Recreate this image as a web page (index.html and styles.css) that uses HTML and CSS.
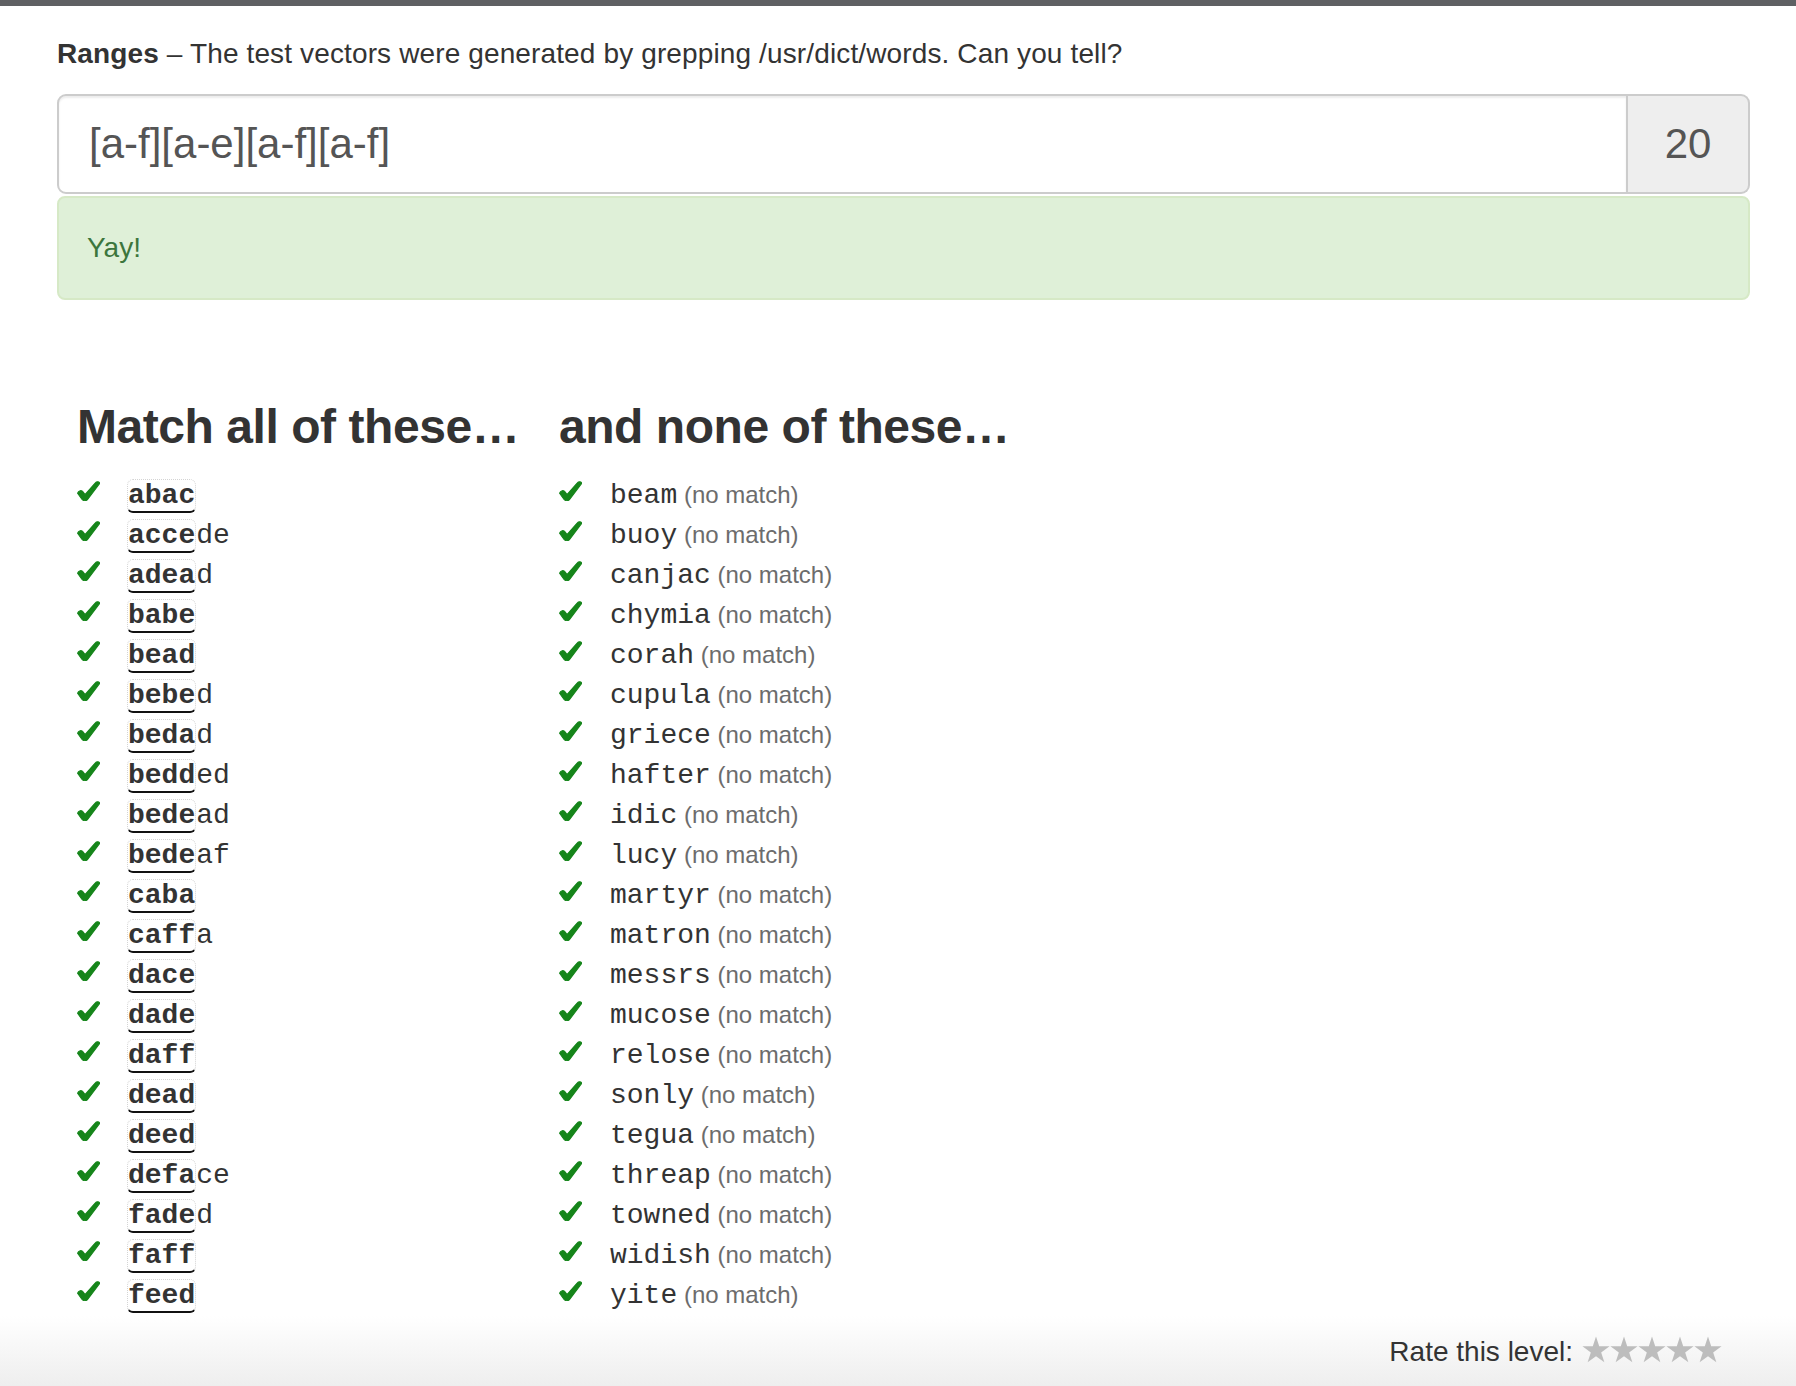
FILE: index.html
```html
<!DOCTYPE html>
<html lang="en">
<head>
<meta charset="utf-8">
<title>Regex Crossword – Ranges</title>
<link rel="stylesheet" href="styles.css">
</head>
<body>
<svg class="defs" width="0" height="0" aria-hidden="true">
  <symbol id="chk" viewBox="0 0 23 20">
    <path d="M0.6 12.2 C1.5 9.4 4.6 8.8 6.2 11 L8 13.6 L18.4 1.8 C19.7 0.2 22.8 0.5 22.5 2.6 L10.8 18.2 C9.3 20.2 6.2 20.2 4.9 18.3 Z"/>
  </symbol>
  <symbol id="star" viewBox="0 0 28 27.5">
    <polygon points="14,0.5 17.26,10.52 27.79,10.52 19.27,16.71 22.52,26.73 14,20.54 5.48,26.73 8.73,16.71 0.21,10.52 10.74,10.52"/>
  </symbol>
</svg>
<div class="topbar"></div>
<div class="page">
  <main class="container">
    <p class="intro"><b>Ranges</b> – The test vectors were generated by grepping /usr/dict/words. Can you tell?</p>
    <div class="input-group">
      <div class="regex">[a-f][a-e][a-f][a-f]</div>
      <div class="score">20</div>
    </div>
    <div class="alert">Yay!</div>
    <div class="lists">
      <section class="col col-match">
        <h3>Match all of these…</h3>
        <ul>
          <li><svg class="chk"><use href="#chk"/></svg><span class="word"><span class="m">abac</span></span></li>
          <li><svg class="chk"><use href="#chk"/></svg><span class="word"><span class="m">acce</span>de</span></li>
          <li><svg class="chk"><use href="#chk"/></svg><span class="word"><span class="m">adea</span>d</span></li>
          <li><svg class="chk"><use href="#chk"/></svg><span class="word"><span class="m">babe</span></span></li>
          <li><svg class="chk"><use href="#chk"/></svg><span class="word"><span class="m">bead</span></span></li>
          <li><svg class="chk"><use href="#chk"/></svg><span class="word"><span class="m">bebe</span>d</span></li>
          <li><svg class="chk"><use href="#chk"/></svg><span class="word"><span class="m">beda</span>d</span></li>
          <li><svg class="chk"><use href="#chk"/></svg><span class="word"><span class="m">bedd</span>ed</span></li>
          <li><svg class="chk"><use href="#chk"/></svg><span class="word"><span class="m">bede</span>ad</span></li>
          <li><svg class="chk"><use href="#chk"/></svg><span class="word"><span class="m">bede</span>af</span></li>
          <li><svg class="chk"><use href="#chk"/></svg><span class="word"><span class="m">caba</span></span></li>
          <li><svg class="chk"><use href="#chk"/></svg><span class="word"><span class="m">caff</span>a</span></li>
          <li><svg class="chk"><use href="#chk"/></svg><span class="word"><span class="m">dace</span></span></li>
          <li><svg class="chk"><use href="#chk"/></svg><span class="word"><span class="m">dade</span></span></li>
          <li><svg class="chk"><use href="#chk"/></svg><span class="word"><span class="m">daff</span></span></li>
          <li><svg class="chk"><use href="#chk"/></svg><span class="word"><span class="m">dead</span></span></li>
          <li><svg class="chk"><use href="#chk"/></svg><span class="word"><span class="m">deed</span></span></li>
          <li><svg class="chk"><use href="#chk"/></svg><span class="word"><span class="m">defa</span>ce</span></li>
          <li><svg class="chk"><use href="#chk"/></svg><span class="word"><span class="m">fade</span>d</span></li>
          <li><svg class="chk"><use href="#chk"/></svg><span class="word"><span class="m">faff</span></span></li>
          <li><svg class="chk"><use href="#chk"/></svg><span class="word"><span class="m">feed</span></span></li>
        </ul>
      </section>
      <section class="col col-none">
        <h3>and none of these…</h3>
        <ul>
          <li><svg class="chk"><use href="#chk"/></svg><span class="word">beam</span><span class="nm"> (no match)</span></li>
          <li><svg class="chk"><use href="#chk"/></svg><span class="word">buoy</span><span class="nm"> (no match)</span></li>
          <li><svg class="chk"><use href="#chk"/></svg><span class="word">canjac</span><span class="nm"> (no match)</span></li>
          <li><svg class="chk"><use href="#chk"/></svg><span class="word">chymia</span><span class="nm"> (no match)</span></li>
          <li><svg class="chk"><use href="#chk"/></svg><span class="word">corah</span><span class="nm"> (no match)</span></li>
          <li><svg class="chk"><use href="#chk"/></svg><span class="word">cupula</span><span class="nm"> (no match)</span></li>
          <li><svg class="chk"><use href="#chk"/></svg><span class="word">griece</span><span class="nm"> (no match)</span></li>
          <li><svg class="chk"><use href="#chk"/></svg><span class="word">hafter</span><span class="nm"> (no match)</span></li>
          <li><svg class="chk"><use href="#chk"/></svg><span class="word">idic</span><span class="nm"> (no match)</span></li>
          <li><svg class="chk"><use href="#chk"/></svg><span class="word">lucy</span><span class="nm"> (no match)</span></li>
          <li><svg class="chk"><use href="#chk"/></svg><span class="word">martyr</span><span class="nm"> (no match)</span></li>
          <li><svg class="chk"><use href="#chk"/></svg><span class="word">matron</span><span class="nm"> (no match)</span></li>
          <li><svg class="chk"><use href="#chk"/></svg><span class="word">messrs</span><span class="nm"> (no match)</span></li>
          <li><svg class="chk"><use href="#chk"/></svg><span class="word">mucose</span><span class="nm"> (no match)</span></li>
          <li><svg class="chk"><use href="#chk"/></svg><span class="word">relose</span><span class="nm"> (no match)</span></li>
          <li><svg class="chk"><use href="#chk"/></svg><span class="word">sonly</span><span class="nm"> (no match)</span></li>
          <li><svg class="chk"><use href="#chk"/></svg><span class="word">tegua</span><span class="nm"> (no match)</span></li>
          <li><svg class="chk"><use href="#chk"/></svg><span class="word">threap</span><span class="nm"> (no match)</span></li>
          <li><svg class="chk"><use href="#chk"/></svg><span class="word">towned</span><span class="nm"> (no match)</span></li>
          <li><svg class="chk"><use href="#chk"/></svg><span class="word">widish</span><span class="nm"> (no match)</span></li>
          <li><svg class="chk"><use href="#chk"/></svg><span class="word">yite</span><span class="nm"> (no match)</span></li>
        </ul>
      </section>
    </div>
  </main>
  <footer class="footer">
    <span class="rate">Rate this level:</span>
    <span class="stars">
      <svg class="star"><use href="#star"/></svg><svg class="star"><use href="#star"/></svg><svg class="star"><use href="#star"/></svg><svg class="star"><use href="#star"/></svg><svg class="star"><use href="#star"/></svg>
    </span>
  </footer>
</div>
</body>
</html>
```

FILE: styles.css
```css
html, body {
  margin: 0;
  padding: 0;
}

body {
  font-family: "Liberation Sans", Arial, Helvetica, sans-serif;
  font-size: 28px;
  line-height: 40px;
  color: #333;
  background: #fff;
}

.defs {
  position: absolute;
  width: 0;
  height: 0;
  overflow: hidden;
}

.topbar {
  height: 6px;
  background: #5f6063;
}

.page {
  min-height: calc(100vh - 6px);
  display: flex;
  flex-direction: column;
}

.container {
  padding: 0 46px 0 57px;
}

.intro {
  margin: 28px 0 20px;
  letter-spacing: 0.13px;
}

.intro b {
  font-weight: 700;
}

.input-group {
  display: flex;
  height: 100px;
}

.regex {
  flex: 1;
  display: flex;
  align-items: center;
  padding: 0 30px;
  border: 2px solid #ccc;
  border-radius: 9px 0 0 9px;
  box-shadow: inset 0 2px 2px rgba(0, 0, 0, 0.075);
  font-size: 42px;
  color: #555;
  background: #fff;
}

.score {
  width: 120px;
  display: flex;
  align-items: center;
  justify-content: center;
  border: 2px solid #ccc;
  border-left: 0;
  border-radius: 0 9px 9px 0;
  background: #eee;
  font-size: 42px;
  color: #555;
}

.alert {
  margin-top: 2px;
  padding: 30px 28px 30px 28px;
  border: 2px solid #d6e9c6;
  border-radius: 8px;
  background: #dff0d8;
  color: #3c763d;
}

.lists {
  display: grid;
  grid-template-columns: 482px 1fr;
  margin-top: 100px;
  padding-left: 20px;
}

.col h3 {
  margin: 0 0 21px;
  font-size: 48px;
  line-height: 53px;
  font-weight: 700;
  letter-spacing: -0.45px;
  color: #333;
}

.col ul {
  list-style: none;
  margin: 0;
  padding: 0;
}

.col li {
  height: 40px;
  white-space: nowrap;
}

.chk {
  width: 23px;
  height: 20px;
  margin-right: 28px;
  vertical-align: 2px;
  fill: #15851a;
  stroke: #15851a;
  stroke-width: 1.1;
  stroke-linejoin: round;
  overflow: visible;
}

.word {
  font-family: "Liberation Mono", "Courier New", monospace;
  font-size: 28px;
  line-height: 1;
  color: #333;
}

.m {
  font-weight: 700;
  border: 1px dotted #d4d4d4;
  border-bottom: 2px solid #111;
  border-radius: 6px;
  margin-left: -1px;
}

.nm {
  font-size: 24px;
  line-height: 1;
  color: #6c6c6c;
}

.footer {
  margin-top: auto;
  height: 70px;
  box-sizing: border-box;
  padding: 16px 74px 0 0;
  display: flex;
  justify-content: flex-end;
  align-items: flex-start;
  background: linear-gradient(to bottom, #ffffff 0%, #eeeeee 100%);
  color: #333;
}

.rate {
  margin-right: 9px;
}

.stars {
  display: inline-flex;
  height: 40px;
  align-items: flex-end;
  padding-bottom: 9px;
  box-sizing: border-box;
}

.star {
  width: 28px;
  height: 27px;
  fill: #bdbdbd;
}
```
